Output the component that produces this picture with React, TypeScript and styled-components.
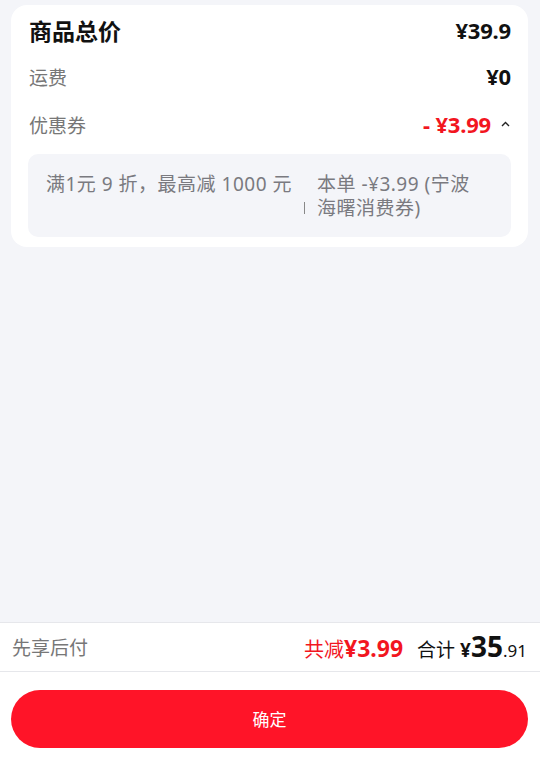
import React from "react";
import styled, { createGlobalStyle } from "styled-components";

const Global = createGlobalStyle`
  html, body { margin: 0; padding: 0; background: #f4f5f9; }
  body { font-family: "Noto Sans", "Noto Sans CJK SC", sans-serif; }
  #root { height: 765px; }
`;

const Page = styled.div`
  height: 765px;
  display: flex;
  flex-direction: column;
  background: #f4f5f9;
`;

const Content = styled.div`
  flex: 1;
  padding: 5px 12px 0 11px;
`;

const Card = styled.div`
  background: #fff;
  border-radius: 16px;
  padding: 3px 17px 10px 17px;
`;

const Row = styled.div<{ $h: number }>`
  height: ${(p) => p.$h}px;
  display: flex;
  align-items: center;
  justify-content: space-between;
  padding-left: 1px;
`;

const Title = styled.span`
  font-size: 23px;
  font-weight: 700;
  color: #111;
  font-family: "Noto Sans CJK SC", sans-serif;
`;

const Label = styled.span`
  font-size: 19px;
  color: #777;
  font-family: "Noto Sans CJK SC", sans-serif;
`;

const Price = styled.span<{ $red?: boolean }>`
  font-size: 22px;
  font-weight: 700;
  color: ${(p) => (p.$red ? "#f2161f" : "#111")};
  font-family: "Noto Sans", "Noto Sans CJK SC", sans-serif;
  letter-spacing: -0.2px;
`;

const Right = styled.div`
  display: flex;
  align-items: center;
  gap: 10px;
`;

const Caret = styled.svg`
  width: 9px;
  height: 6px;
  margin-right: 1px;
`;

const CouponBox = styled.div`
  margin-top: 6px;
  background: #f4f5f9;
  border-radius: 10px;
  padding: 18px 18px 17px 18px;
  display: flex;
  align-items: flex-start;
  gap: 12px;
`;

const CouponText = styled.span<{ $w?: number }>`
  flex: ${(p) => (p.$w ? `0 0 ${p.$w}px` : "none")};
  font-size: 19px;
  letter-spacing: 0.5px;
  line-height: 24px;
  color: #7a7a80;
  font-family: "Noto Sans", "Noto Sans CJK SC", sans-serif;
`;

const Sep = styled.span`
  align-self: flex-end;
  width: 1px;
  height: 12px;
  background: #888;
  margin-bottom: 6px;
`;

const Bar = styled.div`
  height: 46px;
  background: #fff;
  border-top: 1px solid #e6e7eb;
  border-bottom: 1px solid #e6e7eb;
  display: flex;
  align-items: center;
  justify-content: space-between;
  padding: 0 13px 2px 12px;
`;

const BarLabel = styled.span`
  font-size: 19px;
  color: #777;
  font-family: "Noto Sans CJK SC", sans-serif;
`;

const Totals = styled.div`
  display: flex;
  align-items: baseline;
  gap: 14px;
`;

const Group = styled.span`
  display: inline-flex;
  align-items: baseline;
`;

const Txt = styled.span<{ $red?: boolean; $size: number; $bold?: boolean }>`
  font-size: ${(p) => p.$size}px;
  font-weight: ${(p) => (p.$bold ? 700 : 400)};
  color: ${(p) => (p.$red ? "#f2161f" : "#111")};
  font-family: "Noto Sans", "Noto Sans CJK SC", sans-serif;
`;

const Footer = styled.div`
  background: #fff;
  padding: 18px 12px 17px 11px;
`;

const Button = styled.button`
  width: 100%;
  height: 58px;
  border: none;
  border-radius: 29px;
  background: #ff1428;
  color: #fff;
  font-size: 17px;
  font-family: "Noto Sans CJK SC", sans-serif;
  padding: 0 0 2px;
  cursor: pointer;
`;

export default function App() {
  return (
    <>
      <Global />
      <Page>
        <Content>
          <Card>
            <Row $h={44}>
              <Title>商品总价</Title>
              <Price>¥39.9</Price>
            </Row>
            <Row $h={48}>
              <Label>运费</Label>
              <Price>¥0</Price>
            </Row>
            <Row $h={48}>
              <Label>优惠券</Label>
              <Right>
                <Price $red>-&nbsp;¥3.99</Price>
                <Caret viewBox="0 0 9 6">
                  <path d="M1 5 L4.5 1.5 L8 5" fill="none" stroke="#222" strokeWidth="1.4" />
                </Caret>
              </Right>
            </Row>
            <CouponBox>
              <CouponText>满1元 9 折，最高减 1000 元</CouponText>
              <Sep />
              <CouponText $w={166}>本单 -¥3.99 (宁波海曙消费券)</CouponText>
            </CouponBox>
          </Card>
        </Content>
        <Bar>
          <BarLabel>先享后付</BarLabel>
          <Totals>
            <Group>
              <Txt $red $size={20}>共减</Txt>
              <Txt $red $bold $size={23}>¥3.99</Txt>
            </Group>
            <Group>
              <Txt $size={19}>合计&nbsp;</Txt>
              <Txt $bold $size={19}>¥</Txt>
              <Txt $bold $size={28}>35</Txt>
              <Txt $size={17}>.91</Txt>
            </Group>
          </Totals>
        </Bar>
        <Footer>
          <Button>确定</Button>
        </Footer>
      </Page>
    </>
  );
}
